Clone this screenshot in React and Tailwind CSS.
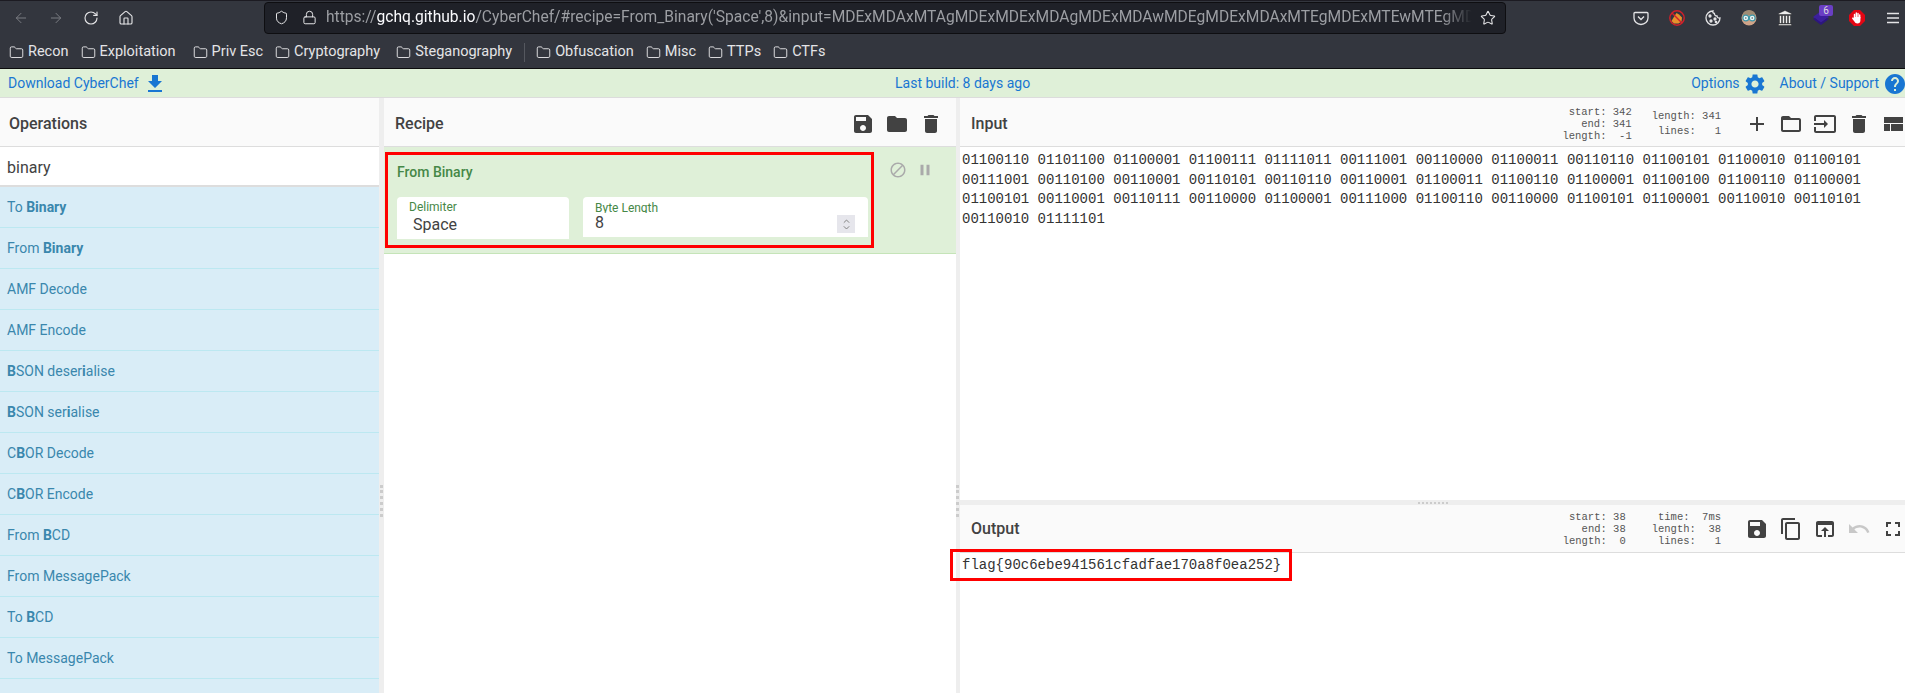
import React from "react";
import { ArrowLeft, ArrowRight, RotateCw, House, Shield, Lock, Star, Folder } from "lucide-react";

const paths = {
  save: "M17 3H5c-1.11 0-2 .9-2 2v14c0 1.1.89 2 2 2h14c1.1 0 2-.9 2-2V7l-4-4zm-5 16c-1.66 0-3-1.34-3-3s1.34-3 3-3 3 1.34 3 3-1.34 3-3 3zm3-10H5V5h10v4z",
  folder: "M10 4H4c-1.1 0-1.99.9-1.99 2L2 18c0 1.1.9 2 2 2h16c1.1 0 2-.9 2-2V8c0-1.1-.9-2-2-2h-8l-2-2z",
  trash: "M6 19c0 1.1.9 2 2 2h8c1.1 0 2-.9 2-2V7H6v12zM19 4h-3.5l-1-1h-5l-1 1H5v2h14V4z",
  add: "M19 13h-6v6h-2v-6H5v-2h6V5h2v6h6v2z",
  folderOpen: "M20 6h-8l-2-2H4c-1.1 0-1.99.9-1.99 2L2 18c0 1.1.9 2 2 2h16c1.1 0 2-.9 2-2V8c0-1.1-.9-2-2-2zm0 12H4V8h16v10z",
  input: "M21 3.01H3c-1.1 0-2 .9-2 2V9h2V4.99h18v14.03H3V15H1v4.01c0 1.1.9 1.98 2 1.98h18c1.1 0 2-.88 2-1.98v-14c0-1.11-.9-2-2-2zM11 16l4-4-4-4v3H1v2h10v3z",
  compact: "M3 19h6v-7H3v7zm7 0h12v-7H10v7zM3 5v6h19V5H3z",
  copy: "M16 1H4c-1.1 0-2 .9-2 2v14h2V3h12V1zm3 4H8c-1.1 0-2 .9-2 2v14c0 1.1.9 2 2 2h11c1.1 0 2-.9 2-2V7c0-1.1-.9-2-2-2zm0 16H8V7h11v14z",
  openIn: "M19 4H5c-1.11 0-2 .9-2 2v12c0 1.1.89 2 2 2h4v-2H5V8h14v10h-4v2h4c1.1 0 2-.9 2-2V6c0-1.1-.89-2-2-2zm-7 6l-4 4h3v6h2v-6h3l-4-4z",
  undo: "M12.5 8c-2.65 0-5.05.99-6.9 2.6L2 7v9h9l-3.62-3.62c1.39-1.16 3.16-1.88 5.12-1.88 3.54 0 6.55 2.31 7.6 5.5l2.37-.78C21.08 11.03 17.15 8 12.5 8z",
  fullscreen: "M7 14H5v5h5v-2H7v-3zm-2-4h2V7h3V5H5v5zm12 7h-3v2h5v-5h-2v3zM14 5v2h3v3h2V5h-5z",
  block: "M12 2C6.48 2 2 6.48 2 12s4.48 10 10 10 10-4.48 10-10S17.52 2 12 2zM4 12c0-4.42 3.58-8 8-8 1.85 0 3.55.63 4.9 1.69L5.69 16.9C4.63 15.55 4 13.85 4 12zm8 8c-1.85 0-3.55-.63-4.9-1.69L18.31 7.1C19.37 8.45 20 10.15 20 12c0 4.42-3.58 8-8 8z",
  pause: "M6 19h4V5H6v14zm8-14v14h4V5h-4z",
  download: "M19 9h-4V3H9v6H5l7 7 7-7zM5 18v2h14v-2H5z",
  settings: "M19.14 12.94c.04-.3.06-.61.06-.94 0-.32-.02-.64-.07-.94l2.03-1.58c.18-.14.23-.41.12-.61l-1.92-3.32c-.12-.22-.37-.29-.59-.22l-2.39.96c-.5-.38-1.03-.7-1.62-.94l-.36-2.54c-.04-.24-.24-.41-.48-.41h-3.84c-.24 0-.43.17-.47.41l-.36 2.54c-.59.24-1.13.57-1.62.94l-2.39-.96c-.22-.08-.47 0-.59.22L2.74 8.87c-.12.21-.08.47.12.61l2.03 1.58c-.05.3-.09.63-.09.94s.02.64.07.94l-2.03 1.58c-.18.14-.23.41-.12.61l1.92 3.32c.12.22.37.29.59.22l2.39-.96c.5.38 1.03.7 1.62.94l.36 2.54c.05.24.24.41.48.41h3.84c.24 0 .44-.17.47-.41l.36-2.54c.59-.24 1.13-.56 1.62-.94l2.39.96c.22.08.47 0 .59-.22l1.92-3.32c.12-.22.07-.47-.12-.61l-2.01-1.58zM12 15.6c-1.98 0-3.6-1.62-3.6-3.6s1.62-3.6 3.6-3.6 3.6 1.62 3.6 3.6-1.62 3.6-3.6 3.6z",
  help: "M12 2C6.48 2 2 6.48 2 12s4.48 10 10 10 10-4.48 10-10S17.52 2 12 2zm1 17h-2v-2h2v2zm2.07-7.75l-.9.92C13.45 12.9 13 13.5 13 15h-2v-.5c0-1.1.45-2.1 1.17-2.83l1.24-1.26c.37-.36.59-.86.59-1.41 0-1.1-.9-2-2-2s-2 .9-2 2H8c0-2.21 1.79-4 4-4s4 1.79 4 4c0 .88-.36 1.68-.93 2.25z",
};

const Mi = ({ name, className = "w-6 h-6 text-[#424242]" }) => (
  <svg viewBox="0 0 24 24" fill="currentColor" className={`shrink-0 ${className}`}>
    <path d={paths[name]} />
  </svg>
);

const bookmarks = [
  ["Recon", ""],
  ["Exploitation", ""],
  ["Priv Esc", "ml-[5px]"],
  ["Cryptography", ""],
  ["Steganography", "ml-[4px]"],
];
const bookmarks2 = ["Obfuscation", "Misc", "TTPs", "CTFs"];

// [text, bold] pairs per operation, bold parts are the search hits
const ops = [
  [["To "], ["Binary", 1]],
  [["From "], ["Binary", 1]],
  [["AMF Decode"]],
  [["AMF Encode"]],
  [["B", 1], ["SON deser"], ["i", 1], ["alise"]],
  [["B", 1], ["SON ser"], ["i", 1], ["alise"]],
  [["C"], ["B", 1], ["OR Decode"]],
  [["C"], ["B", 1], ["OR Encode"]],
  [["From "], ["B", 1], ["CD"]],
  [["From MessagePack"]],
  [["To "], ["B", 1], ["CD"]],
  [["To MessagePack"]],
];

const binaryInput =
  "01100110 01101100 01100001 01100111 01111011 00111001 00110000 01100011 00110110 01100101 01100010 01100101 00111001 00110100 00110001 00110101 00110110 00110001 01100011 01100110 01100001 01100100 01100110 01100001 01100101 00110001 00110111 00110000 01100001 00111000 01100110 00110000 01100101 01100001 00110010 00110101 00110010 01111101";

const Bookmark = ({ label, className = "" }) => (
  <div className={`flex items-center gap-[4px] ${className}`}>
    <Folder className="w-[15px] h-[15px] text-[#e4e4e6]" strokeWidth={1.5} />
    <span>{label}</span>
  </div>
);

const Stats = ({ children, className = "" }) => (
  <pre className={`font-['Liberation_Mono',monospace] text-[10.5px] leading-[12px] text-right text-[#555] ${className}`}>
    {children}
  </pre>
);

const ExtensionIcons = () => (
  <div className="flex items-center gap-5 mr-1 text-[#e4e4e6]">
    {/* pocket */}
    <svg viewBox="0 0 16 16" className="w-4 h-4" fill="none" stroke="currentColor" strokeWidth="1.3">
      <path d="M2 2.500h12a1 1 0 0 1 1 1V8a7 6.500 0 0 1-14 0V3.500a1 1 0 0 1 1-1z" />
      <path d="M5 6.500l3 3 3-3" />
    </svg>
    {/* blocked fox */}
    <svg viewBox="0 0 16 16" className="w-4 h-4">
      <circle cx="8" cy="8" r="7.200" fill="#33363e" stroke="#d2202a" strokeWidth="1.400" />
      <path d="M2.500 11l3-5 2-3 2.500 1.500 3 3-.5 4-3 2H5z" fill="#e8912c" />
      <path d="M3 3l10 10" stroke="#d2202a" strokeWidth="1.400" />
    </svg>
    {/* cookie */}
    <svg viewBox="0 0 16 16" className="w-4 h-4" fill="none" stroke="currentColor" strokeWidth="1.300">
      <path d="M8 1a7 7 0 1 0 7 7c-1.500.3-2.800-.4-3-2-1.600 0-2.800-1-2.600-2.600C8 3.200 7.500 2.200 8 1z" />
      <circle cx="5" cy="6" r="1" fill="currentColor" />
      <circle cx="6" cy="11" r="1" fill="currentColor" />
      <circle cx="10" cy="9" r="1" fill="currentColor" />
      <circle cx="11" cy="12" r="0.700" fill="currentColor" />
    </svg>
    {/* face with glasses */}
    <svg viewBox="0 0 16 16" className="w-4 h-4">
      <circle cx="8" cy="8" r="7.500" fill="#d0a488" />
      <path d="M1.500 5.500a6.500 5.500 0 0 1 13 0z" fill="#a08c74" />
      <circle cx="4.800" cy="8" r="2.900" fill="#e6f6f6" stroke="#3f97a8" strokeWidth="1.200" />
      <circle cx="11.200" cy="8" r="2.900" fill="#e6f6f6" stroke="#3f97a8" strokeWidth="1.200" />
      <circle cx="4.800" cy="8" r="0.800" fill="#555" />
      <circle cx="11.200" cy="8" r="0.800" fill="#555" />
    </svg>
    {/* museum */}
    <svg viewBox="0 0 16 16" className="w-4 h-4" fill="#eee" stroke="#111" strokeWidth="0.400">
      <path d="M8 .5L14.500 3.500v1h-13v-1z" />
      <path d="M2.500 5.500h2v8h-2zM5.500 5.500h2v8h-2zM8.500 5.500h2v8h-2zM11.500 5.500h2v8h-2z" />
      <path d="M1.500 14h13v1.500h-13z" />
    </svg>
    {/* layers with badge */}
    <div className="relative w-4 h-4">
      <svg viewBox="0 0 16 16" className="w-4 h-4" fill="#3c1f9c">
        <path d="M8 1l8 6-8 6-8-6z" />
        <path d="M0 9l8 6 8-6-2-1-6 4.500L2 8z" fill="#2d1680" />
      </svg>
      <div className="absolute -top-[5px] -right-[4px] w-[14px] h-[11px] rounded-[2px] bg-[#6a3fc4] text-[10px] leading-[11px] text-center text-[#ddd]">
        6
      </div>
    </div>
    {/* stop hand */}
    <svg viewBox="0 0 16 16" className="w-4 h-4">
      <path d="M5 0h6l5 5v6l-5 5H5l-5-5V5z" fill="#e30613" />
      <path d="M5.500 8V4.500M7.300 8V3M9 8V3.500M10.700 8V5" stroke="#fff" strokeWidth="1.400" strokeLinecap="round" />
      <path d="M4.800 7h6.600v3.500c0 1.800-1.200 3-3 3-1.500 0-2.400-.7-3-2L3.200 8.700c-.4-.8.500-1.400 1.100-.9l.5.4z" fill="#fff" />
    </svg>
    {/* menu */}
    <svg viewBox="0 0 16 16" className="w-4 h-4" stroke="currentColor" strokeWidth="1.300">
      <path d="M2 3.500h12M2 8h12M2 12.500h12" />
    </svg>
  </div>
);

export default function App() {
  return (
    <div className="h-[693px] w-[1905px] overflow-hidden flex flex-col bg-white font-['Roboto',sans-serif]">
      {/* browser toolbar */}
      <div className="h-[34px] shrink-0 flex items-center bg-[#33363e] border-t border-[#1c1b22]">
        <div className="flex items-center w-[264px] pl-[13px] gap-[19px]">
          <ArrowLeft className="w-4 h-4 text-[#7a7c82]" strokeWidth={1.5} />
          <ArrowRight className="w-4 h-4 text-[#7a7c82]" strokeWidth={1.5} />
          <RotateCw className="w-4 h-4 text-[#e4e4e6]" strokeWidth={1.7} />
          <House className="w-4 h-4 text-[#e4e4e6]" strokeWidth={1.7} />
        </div>
        <div className="h-[32px] w-[1242px] flex items-center rounded-[4px] bg-[#1f2128] border border-[#0e0e11] pl-[9px] pr-[9px]">
          <Shield className="w-[15px] h-[15px] text-[#e4e4e6] shrink-0" strokeWidth={1.6} />
          <Lock className="w-[15px] h-[15px] text-[#e4e4e6] shrink-0 ml-[13px]" strokeWidth={1.6} />
          <div className="ml-[9px] flex-1 min-w-0 overflow-hidden whitespace-nowrap text-[15.6px] text-[#9c9ea3] [mask-image:linear-gradient(to_left,transparent,black_30px)]">
            https://<span className="text-[#fbfbfe]">gchq.github.io</span>
            /CyberChef/#recipe=From_Binary('Space',8)&amp;input=MDExMDAxMTAgMDExMDExMDAgMDExMDAwMDEgMDExMDAxMTEgMDExMTEwMTEgMDAxMTEwMDEg
          </div>
          <Star className="w-4 h-4 text-[#e4e4e6] shrink-0 ml-[8px]" strokeWidth={1.6} />
        </div>
        <div className="flex-1 flex justify-end">
          <ExtensionIcons />
        </div>
      </div>

      {/* bookmarks */}
      <div className="h-[35px] shrink-0 flex items-center gap-[12px] pl-[9px] pt-[2px] bg-[#33363e] border-b border-[#0c0c0d] text-[14.5px] text-[#e4e4e6]">
        {bookmarks.map(([label, cls]) => (
          <Bookmark key={label} label={label} className={cls} />
        ))}
        <div className="w-px h-[19px] bg-[#55585f] -mr-px" />
        {bookmarks2.map((label) => (
          <Bookmark key={label} label={label} />
        ))}
      </div>

      {/* CyberChef banner */}
      <div className="h-[29px] shrink-0 flex items-center pt-px bg-[#dff0d8] border-b border-[#dcdcdc] text-[14px] text-[#1976d2]">
        <div className="w-[895px] flex items-center pl-2 gap-[4px]">
          <span>Download CyberChef</span>
          <Mi name="download" className="w-6 h-6 text-[#1976d2]" />
        </div>
        <span>Last build: 8 days ago</span>
        <div className="flex-1 flex items-center justify-end">
          <span>Options</span>
          <Mi name="settings" className="w-6 h-6 ml-[3px] text-[#1976d2]" />
          <span className="ml-[13px]">About / Support</span>
          <Mi name="help" className="w-6 h-6 ml-[4px] -mr-[2px] text-[#1976d2]" />
        </div>
      </div>

      <div className="flex-1 min-h-0 flex">
        {/* operations */}
        <div className="w-[379px] shrink-0 flex flex-col">
          <div className="h-[49px] shrink-0 flex items-center pl-[9px] pt-[3px] bg-[#fafafa] border-b border-[#dddddd] text-[16px] font-medium text-[#424242]">
            Operations
          </div>
          <div className="h-[40px] shrink-0 flex items-center pl-[7px] pt-[3px] border-b-2 border-[#dddddd] text-[16px] text-[#424242]">
            binary
          </div>
          <div className="flex-1 bg-[#d9edf7]">
            {ops.map((parts, i) => (
              <div
                key={i}
                className="h-[41px] flex items-center pl-[7px] border-b border-[#bce8f1] text-[14px] text-[#3a87ad] whitespace-pre"
              >
                {parts.map(([t, b], j) =>
                  b ? (
                    <b key={j} className="font-bold">{t}</b>
                  ) : (
                    <span key={j}>{t}</span>
                  )
                )}
              </div>
            ))}
          </div>
        </div>

        {/* gutter */}
        <div className="w-[5px] shrink-0 bg-[#eeeeee] pt-[387px]">
          <div className="h-[32px] w-[3px] ml-px border-l-[3px] border-dotted border-[#cccccc]" />
        </div>

        {/* recipe */}
        <div className="w-[572px] shrink-0 flex flex-col">
          <div className="h-[49px] shrink-0 flex items-center justify-between pl-[11px] pr-[13px] pt-[3px] bg-[#fafafa] border-b border-[#dddddd]">
            <span className="text-[16px] font-medium text-[#424242]">Recipe</span>
            <div className="flex gap-[10px]">
              <Mi name="save" />
              <Mi name="folder" />
              <Mi name="trash" />
            </div>
          </div>
          <div className="relative h-[107px] shrink-0 flex bg-[#dff0d8] border-b border-[#c5e4b8] pl-[13px]">
            <div className="w-[471px] shrink-0 flex flex-col">
              <div className="h-[50px] shrink-0 flex items-center text-[14px] font-medium text-[#468847]">
                From Binary
              </div>
              <div className="flex items-start gap-[14px]">
                <div className="w-[172px] h-[42px] rounded-t-[4px] bg-white pl-[12px] pt-[3px]">
                  <div className="text-[12px] leading-[14px] text-[#468847]">Delimiter</div>
                  <div className="text-[16px] leading-[20px] pl-[4px] mt-[1px] text-[#424242]">Space</div>
                </div>
                <div className="relative w-[285px] h-[40px] rounded-t-[4px] bg-white pl-[12px] pt-[4px]">
                  <div className="h-[12px] overflow-hidden text-[12px] leading-[14px] text-[#468847]">Byte Length</div>
                  <div className="text-[16px] leading-[20px] text-[#424242]">8</div>
                  <div className="absolute right-[13px] top-[18px] w-[18px] h-[18px] bg-[#e6e6ec] flex flex-col items-center justify-center">
                    <svg viewBox="0 0 10 12" className="w-[9px] h-[13px]" fill="none" stroke="#777" strokeWidth="1">
                      <path d="M2 4l3-3 3 3M2 8l3 3 3-3" />
                    </svg>
                  </div>
                </div>
              </div>
            </div>
            <div className="flex items-start pt-[14px] ml-[21px] gap-[9px]">
              <Mi name="block" className="w-[18px] h-[18px] text-[#aaaaaa]" />
              <Mi name="pause" className="w-[18px] h-[18px] text-[#aaaaaa]" />
            </div>
            <div className="absolute top-[5px] left-[1px] w-[489px] h-[96px] border-[3px] border-[#ff0000] pointer-events-none" />
          </div>
        </div>

        {/* gutter */}
        <div className="w-[4px] shrink-0 bg-[#eeeeee] pt-[387px]">
          <div className="h-[32px] w-[3px] border-l-[3px] border-dotted border-[#cccccc]" />
        </div>

        {/* input + output */}
        <div className="flex-1 min-w-0 flex flex-col">
          <div className="h-[49px] shrink-0 flex items-center pl-[11px] pt-[3px] bg-[#fafafa] border-b border-[#dddddd]">
            <span className="text-[16px] font-medium text-[#424242]">Input</span>
            <div className="ml-auto flex items-center">
              <Stats>{"start: 342\nend: 341\nlength:  -1"}</Stats>
              <Stats className="ml-[20px] leading-[15px]!">{"length: 341\nlines:   1"}</Stats>
              <div className="flex gap-[10px] ml-[24px]">
                <Mi name="add" />
                <Mi name="folderOpen" />
                <Mi name="input" />
                <Mi name="trash" />
                <Mi name="compact" />
              </div>
            </div>
          </div>
          <div className="h-[353px] shrink-0 pl-[2px] pr-[2px] pt-[4px] font-['Liberation_Mono',monospace] text-[14px] leading-[19.7px] text-[#333333] break-words">
            {binaryInput}
          </div>
          <div className="h-[5px] shrink-0 bg-[#eeeeee] flex justify-center items-center">
            <div className="w-[30px] h-[2px] border-t-2 border-dotted border-[#cccccc]" />
          </div>
          <div className="h-[48px] shrink-0 flex items-center pl-[11px] bg-[#fafafa] border-b border-[#dddddd]">
            <span className="text-[16px] font-medium text-[#424242]">Output</span>
            <div className="ml-auto flex items-center">
              <Stats>{"start: 38\nend: 38\nlength:  0"}</Stats>
              <Stats className="ml-[26px]">{"time:  7ms\nlength:  38\nlines:   1"}</Stats>
              <div className="flex gap-[10px] ml-[24px]">
                <Mi name="save" />
                <Mi name="copy" />
                <Mi name="openIn" />
                <Mi name="undo" className="w-6 h-6 text-[#c8c8c8]" />
                <Mi name="fullscreen" />
              </div>
            </div>
          </div>
          <div className="relative flex-1 pl-[2px] pt-[2px] font-['Liberation_Mono',monospace] text-[14px] leading-[20px] text-[#333333]">
            flag{"{"}90c6ebe941561cfadfae170a8f0ea252{"}"}
            <div className="absolute -top-[4px] -left-[10px] w-[342px] h-[32px] border-[3px] border-[#ff0000] pointer-events-none" />
          </div>
        </div>
      </div>
    </div>
  );
}
